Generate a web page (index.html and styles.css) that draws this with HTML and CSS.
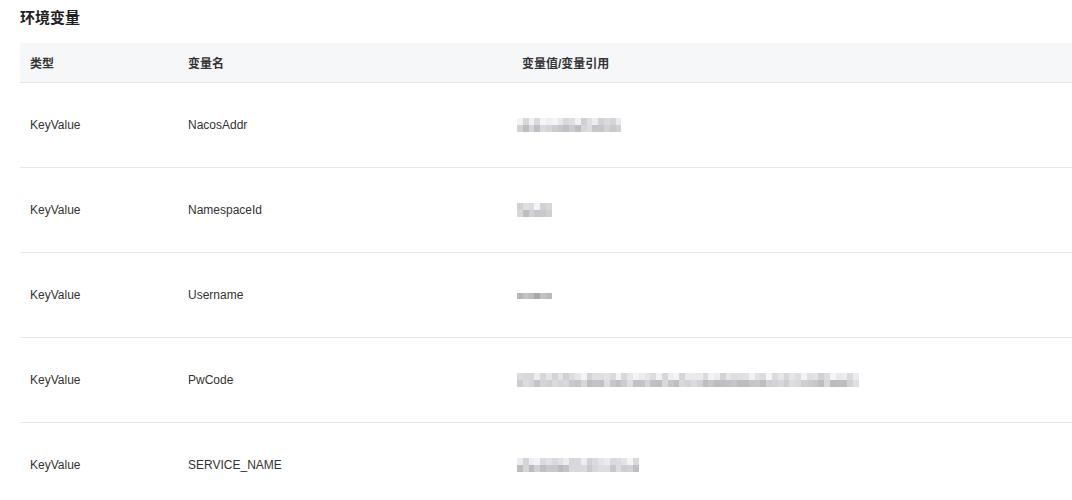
FILE: index.html
```html
<!DOCTYPE html>
<html lang="zh-CN">
<head>
  <meta charset="UTF-8" />
  <meta name="viewport" content="width=device-width, initial-scale=1.0">
  <title>环境变量</title>
  <link rel="stylesheet" href="styles.css">
</head>
<body>
  <div class="section">
    <h3 class="section-title">环境变量</h3>
    <table class="env-table">
      <colgroup>
        <col class="col-type">
        <col class="col-name">
        <col>
      </colgroup>
      <thead>
        <tr>
          <th>类型</th>
          <th>变量名</th>
          <th>变量值/变量引用</th>
        </tr>
      </thead>
      <tbody id="env-body"></tbody>
    </table>
  </div>

  <script>
    // values are masked in the screenshot, so each row only knows its mask size
    const envVars = [
      { type: 'KeyValue', name: 'NacosAddr', cells: 18, rows: 2, seed: 3 },
      { type: 'KeyValue', name: 'NamespaceId', cells: 6, rows: 2, seed: 7 },
      { type: 'KeyValue', name: 'Username', cells: 6, rows: 1, seed: 11 },
      { type: 'KeyValue', name: 'PwCode', cells: 59, rows: 2, seed: 5 },
      { type: 'KeyValue', name: 'SERVICE_NAME', cells: 21, rows: 2, seed: 13 }
    ];

    function maskCell(seed, i, row, thin) {
      const n = Math.abs(Math.sin(seed * 31.7 + i * 12.9 + row * 78.2) * 43758.5) % 1;
      const base = thin ? 178 : (row === 0 ? 224 : 200);
      const g = Math.round(base + (n - 0.5) * 40);
      return `rgb(${g}, ${g}, ${Math.min(255, g + 4)})`;
    }

    function renderMask(v) {
      const mask = document.createElement('div');
      mask.className = 'mask';
      const thin = v.rows === 1;
      for (let r = 0; r < v.rows; r++) {
        const row = document.createElement('div');
        row.className = thin ? 'mask-row thin' : 'mask-row';
        for (let i = 0; i < v.cells; i++) {
          const cell = document.createElement('span');
          cell.className = 'mask-cell';
          cell.style.background = maskCell(v.seed, i, r, thin);
          row.appendChild(cell);
        }
        mask.appendChild(row);
      }
      return mask;
    }

    const body = document.getElementById('env-body');
    for (const v of envVars) {
      const tr = document.createElement('tr');
      tr.innerHTML = `<td>${v.type}</td><td>${v.name}</td><td></td>`;
      tr.lastChild.appendChild(renderMask(v));
      body.appendChild(tr);
    }
  </script>
</body>
</html>
```

FILE: styles.css
```css
body {
  margin: 0;
  font-family: "Liberation Sans", "Noto Sans CJK SC", sans-serif;
  color: #333;
  background: #fff;
}
.section {
  padding: 8px 0 0 20px;
}
.section-title {
  margin: 0 0 15px;
  font-size: 15px;
  line-height: 20px;
  font-weight: bold;
  color: #222;
}
.env-table {
  width: 100%;
  border-collapse: collapse;
  font-size: 12px;
}
.col-type {
  width: 158px;
}
.col-name {
  width: 334px;
}
.env-table th {
  height: 39px;
  padding: 0 10px;
  text-align: left;
  font-weight: bold;
  color: #333;
  background: #f6f7f9;
  border-bottom: 1px solid #e3e3ec;
}
.env-table td {
  height: 84px;
  padding: 0 10px;
  border-bottom: 1px solid #e6e6ee;
  vertical-align: middle;
}
.mask {
  display: inline-flex;
  flex-direction: column;
  vertical-align: middle;
  margin-left: -5px;
  opacity: 0.9;
}
.mask-row {
  display: flex;
  height: 7px;
}
.mask-row.thin {
  height: 6px;
}
.mask-cell {
  width: 5.8px;
}
```
